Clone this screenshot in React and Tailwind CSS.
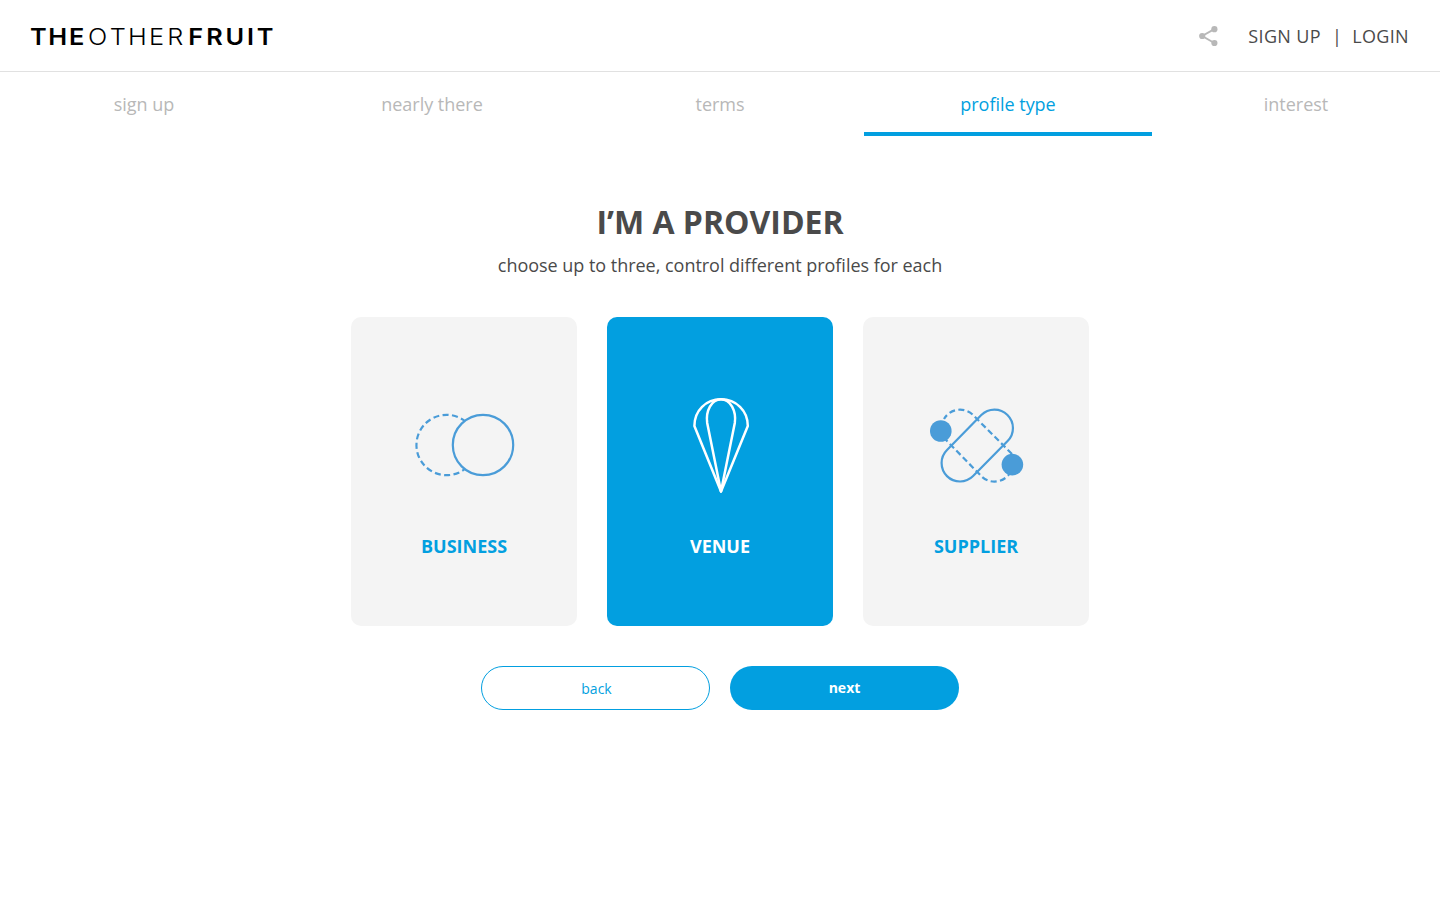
const STEPS = ['sign up', 'nearly there', 'terms', 'profile type', 'interest'];

function Logo() {
  return (
    <svg width="250" height="30" viewBox="25 20 250 30" className="block" role="img" aria-label="The Other Fruit">
      <g fontFamily="Inter, sans-serif" fontSize="22.6" fill="#000" transform="scale(1.12 1)">
        <text y="43.9" x="26.9 43.1 61.7" fontWeight="600">THE</text>
        <text y="43.9" x="78.6 98 114.4 133 149.4" fontWeight="300">OTHER</text>
        <text y="43.9" x="168 184.1 201.4 220.6 229.2" fontWeight="600">FRUIT</text>
      </g>
    </svg>
  );
}

function ShareIcon() {
  return (
    <svg width="20" height="22" viewBox="1199 25 20 22" className="block">
      <path d="M1214.3 29.2 1202.2 36l12.1 7" fill="none" stroke="#b8b8b8" strokeWidth="1.9" />
      <g fill="#b8b8b8">
        <circle cx="1214.4" cy="29.2" r="3.1" />
        <circle cx="1202.2" cy="36" r="3.1" />
        <circle cx="1214.4" cy="43" r="3.1" />
      </g>
    </svg>
  );
}

function BusinessIcon() {
  return (
    <svg width="104" height="100" viewBox="412 395 104 100" fill="none" stroke="#4a9cd8" strokeWidth="2.2">
      <circle cx="483" cy="445" r="30.2" />
      <path d="M464.7 469.2A30.2 30.2 0 1 1 464.7 420.8" strokeDasharray="6 3.4" strokeDashoffset="3" />
    </svg>
  );
}

function VenueIcon() {
  return (
    <svg width="102" height="100" viewBox="669 395 102 100" fill="none" stroke="#fff" strokeWidth="2.5" strokeLinejoin="round">
      <path d="M721 491.5 694.4 426C694.4 410.5 706 399.3 721 399.3S747.8 410.5 747.8 426Z" />
      <path d="M721 491.5 707.2 423C705.5 411 711.5 399.3 721 399.3S736.5 411 734.8 423Z" />
    </svg>
  );
}

function SupplierIcon() {
  return (
    <svg width="98" height="100" viewBox="927 395 98 100" fill="none" stroke="#4a9cd8" strokeWidth="2.2">
      <path d="M981.3 415.1A18.4 18.4 0 0 1 1007.6 441.1L973.1 476.1A18.4 18.4 0 0 1 947 450Z" />
      <path d="M944 419A18.4 18.4 0 0 1 973.1 415.1L1012 454" strokeDasharray="6 3.3" strokeDashoffset="1" />
      <path d="M944 438 981.3 476.1A18.4 18.4 0 0 0 1010 473" strokeDasharray="6 3.3" strokeDashoffset="1" />
      <g fill="#4a9cd8" stroke="none">
        <circle cx="940.8" cy="431" r="10.8" />
        <circle cx="1012.4" cy="464.6" r="10.8" />
      </g>
    </svg>
  );
}

const CARDS = [
  { name: 'BUSINESS', Icon: BusinessIcon },
  { name: 'VENUE', Icon: VenueIcon, active: true },
  { name: 'SUPPLIER', Icon: SupplierIcon },
];

export default function App() {
  return (
    <div className="h-[900px] bg-white font-['Open_Sans',sans-serif] text-lg text-[#4a4a4a]">
      <header className="flex h-18 items-center justify-between border-b border-[#e1e1e1] pr-[31px] pl-[25px]">
        <Logo />
        <div className="flex items-center">
          <ShareIcon />
          <nav className="ml-[29px] flex tracking-[0.35px]">
            <a>SIGN UP</a>
            <span className="mr-[10px] ml-[11px]">|</span>
            <a>LOGIN</a>
          </nav>
        </div>
      </header>

      <ol className="grid h-16 grid-cols-5 text-center tracking-[-0.02px]">
        {STEPS.map((step) => (
          <li
            key={step}
            className={
              step === 'profile type'
                ? 'border-b-4 border-[#029fe0] pt-[18px] text-[#029fe0]'
                : 'pt-[18px] text-[#b8b8b8]'
            }
          >
            {step}
          </li>
        ))}
      </ol>

      <main className="flex flex-col items-center pt-16">
        <h1 className="text-[32px] leading-[44px] font-bold">I’M A PROVIDER</h1>
        <p className="mt-[7px] leading-7 tracking-[-0.025px]">choose up to three, control different profiles for each</p>

        <div className="mt-[38px] flex gap-[30px]">
          {CARDS.map(({ name, Icon, active }) => (
            <button
              key={name}
              className={
                active
                  ? 'flex h-[309px] w-[226px] flex-col items-center rounded-[10px] bg-[#029fe0] pt-[78px] font-bold text-white'
                  : 'flex h-[309px] w-[226px] flex-col items-center rounded-[10px] bg-[#f4f4f4] pt-[78px] font-bold text-[#029fe0]'
              }
            >
              <Icon />
              <span className="mt-[37px] leading-7">{name}</span>
            </button>
          ))}
        </div>

        <div className="mt-10 flex gap-5 text-sm">
          <button className="h-11 w-[229px] rounded-full border border-[#029fe0] pt-px pl-0.5 text-[#029fe0]">back</button>
          <button className="h-11 w-[229px] rounded-full bg-[#029fe0] font-bold text-white">next</button>
        </div>
      </main>
    </div>
  );
}
